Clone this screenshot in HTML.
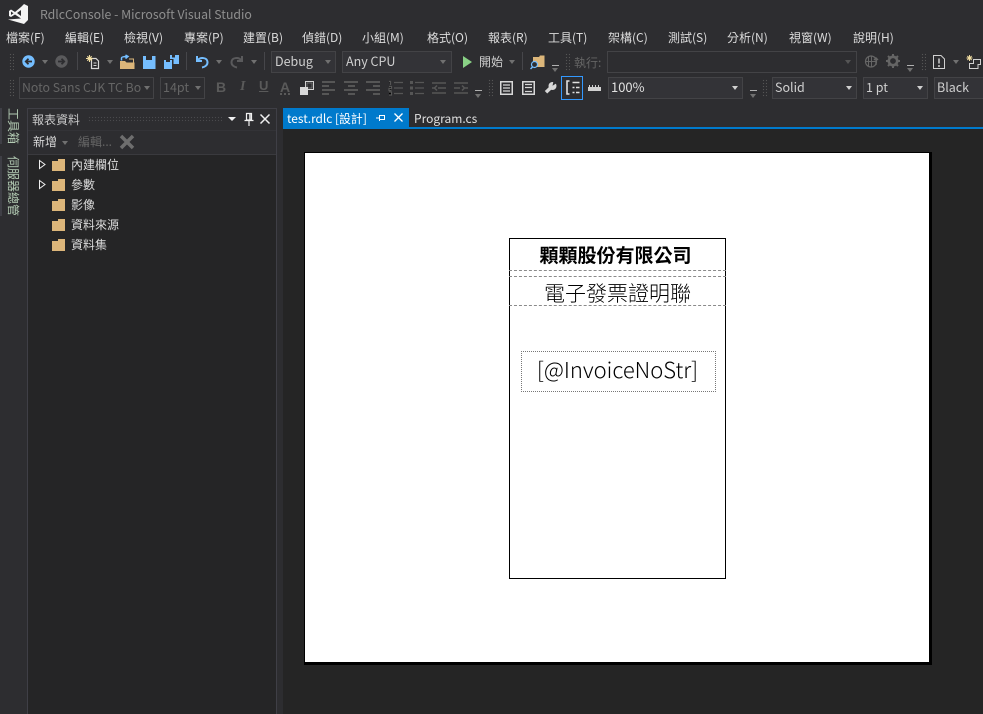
<!DOCTYPE html>
<html><head><meta charset="utf-8">
<style>
html,body{margin:0;padding:0;background:#2d2d30;}
#r{position:relative;width:983px;height:714px;overflow:hidden;background:#2d2d30;font-family:"Liberation Sans","Noto Sans CJK TC",sans-serif;color:#d0d0d0;}
#r *{box-sizing:border-box;}
.a{position:absolute;}
.t{position:absolute;white-space:nowrap;line-height:16px;font-size:12px;font-family:"Noto Sans CJK TC","Liberation Sans",sans-serif;}
.m{top:30px;color:#dcdcdc;}
.c{position:absolute;border:1px solid #434346;height:22px;background:#333337;color:#d0d0d0;font-size:12.5px;line-height:18px;padding-left:3px;white-space:nowrap;font-family:"Noto Sans CJK TC","Liberation Sans",sans-serif;}
.d{color:#656565;border-color:#434346;background:#2d2d30;}
.ar{position:absolute;width:0;height:0;border-left:3.5px solid transparent;border-right:3.5px solid transparent;border-top:4px solid #d0d0d0;}
.ar.g{border-top-color:#707070;}
.grip{position:absolute;width:5px;background-image:radial-gradient(#555 .7px,transparent .8px);background-size:3px 3px;}
.sep{position:absolute;width:1px;height:18px;background:#46464a;}
.f{position:absolute;left:52px;width:13px;height:10px;background:#dcb67a;}
.f:before{content:"";position:absolute;left:6px;top:-2px;width:7px;height:2px;background:#dcb67a;}
.dl{position:absolute;left:509px;width:217px;border-top:1px dashed #8a8a8a;height:0;}
.v{position:absolute;writing-mode:vertical-rl;text-orientation:sideways;font-size:12px;line-height:14px;white-space:nowrap;color:#b4ccb4;font-family:"Noto Sans CJK TC","Liberation Sans",sans-serif;}
svg{position:absolute;overflow:visible;}
</style></head><body><div id="r">

<!-- title -->
<svg style="left:0;top:0" width="30" height="26" viewBox="0 0 30 26"><path d="M21 7L24 4L28 6V20L24 24L8 19.500L21 18.500Z" fill="#f4f4f4"/><path d="M21 7L15 12L11 9.500L9 11V16L11 17L15 14.500L21 18.500ZM21 10L17 13L21 16ZM11 11.500V15L13.500 13.200Z" fill="#f4f4f4" fill-rule="evenodd"/></svg>
<div class="t" style="left:40px;top:6px;color:#8e8e8e;font-size:12.3px;">RdlcConsole - Microsoft Visual Studio</div>

<!-- menu -->
<div class="t m" style="left:6px">檔案(F)</div>
<div class="t m" style="left:65px">編輯(E)</div>
<div class="t m" style="left:124px">檢視(V)</div>
<div class="t m" style="left:184px">專案(P)</div>
<div class="t m" style="left:243px">建置(B)</div>
<div class="t m" style="left:302px">偵錯(D)</div>
<div class="t m" style="left:362px">小組(M)</div>
<div class="t m" style="left:427px">格式(O)</div>
<div class="t m" style="left:488px">報表(R)</div>
<div class="t m" style="left:548px">工具(T)</div>
<div class="t m" style="left:608px">架構(C)</div>
<div class="t m" style="left:668px">測試(S)</div>
<div class="t m" style="left:727px">分析(N)</div>
<div class="t m" style="left:789px">視窗(W)</div>
<div class="t m" style="left:853px">說明(H)</div>

<!-- toolbar 1 -->
<div class="grip" style="left:9px;top:53px;height:18px"></div>
<svg style="left:22px;top:55px" width="13" height="13" viewBox="0 0 13 13"><circle cx="6.500" cy="6.500" r="6.200" fill="#75beff"/><path d="M10 6.500H4M6.500 3.800L3.800 6.500L6.500 9.200" stroke="#2d2d30" stroke-width="1.800" fill="none"/></svg>
<div class="ar g" style="left:42px;top:60px"></div>
<svg style="left:55px;top:55px" width="13" height="13" viewBox="0 0 13 13"><circle cx="6.500" cy="6.500" r="6.200" fill="#5a5a5c"/><path d="M3 6.500H9M6.500 3.800L9.200 6.500L6.500 9.200" stroke="#2d2d30" stroke-width="1.800" fill="none"/></svg>
<div class="sep" style="left:77px;top:52px"></div>
<svg style="left:86px;top:55px" width="15" height="15" viewBox="0 0 15 15"><path d="M5.500 3.500H10L12.500 6V13.500H5.500Z" fill="none" stroke="#d8d8d8" stroke-width="1.200"/><path d="M3.500 0V7M0 3.500H7M1.300 1.300L5.700 5.700M5.700 1.300L1.300 5.700" stroke="#f0dca0" stroke-width="1.100"/><path d="M7.500 8H10.500M7.500 10.500H10.500" stroke="#d8d8d8"/></svg>
<div class="ar g" style="left:107px;top:60px"></div>
<svg style="left:120px;top:55px" width="15" height="14" viewBox="0 0 15 14"><path d="M0 6H5L6.500 7.500H14.500V14H0Z" fill="#dcb67a"/><path d="M1.500 5.500V3C1.500 2 3 1.500 7 1.500M5.500 0L8 1.500L5.500 3.500" stroke="#75beff" stroke-width="1.500" fill="none"/><path d="M9 4H13.500V7.500" stroke="#dcb67a" fill="none"/></svg>
<svg style="left:143px;top:56px" width="13" height="13" viewBox="0 0 13 13"><path d="M0 0H3V4H9V0H12.500V13H0Z" fill="#75beff"/></svg>
<svg style="left:164px;top:55px" width="15" height="14" viewBox="0 0 15 14"><path d="M0 5H2V7H6V5H8V14H0Z" fill="#75beff"/><path d="M6 0H8V2.500H11V0H15V9H9.500V4H6Z" fill="#75beff"/></svg>
<div class="sep" style="left:186px;top:52px"></div>
<svg style="left:195px;top:54px" width="14" height="15" viewBox="0 0 14 15"><path d="M2 2V7H7M2.500 6.500C5 3 12 3 12.500 8C12.800 11 10 13 7 13.500" stroke="#75beff" stroke-width="2" fill="none"/></svg>
<div class="ar g" style="left:216px;top:60px"></div>
<svg style="left:230px;top:54px" width="14" height="15" viewBox="0 0 14 15"><path d="M12 2V7H7M11.500 6.500C9 3 2 3 1.500 8C1.200 11 4 13 7 13.500" stroke="#5a5a5c" stroke-width="2" fill="none"/></svg>
<div class="ar g" style="left:251px;top:60px"></div>
<div class="sep" style="left:264px;top:52px"></div>
<div class="c" style="left:271px;top:51px;width:65px;height:22px;">Debug<div class="ar g" style="left:53px;top:8px"></div></div>
<div class="c" style="left:342px;top:51px;width:110px;height:22px;">Any CPU<div class="ar g" style="left:97px;top:8px"></div></div>
<svg style="left:463px;top:56px" width="9" height="12" viewBox="0 0 9 12"><path d="M0 0L9 6L0 12Z" fill="#89d185"/></svg>
<div class="t" style="left:479px;top:54px;">開始</div>
<div class="ar g" style="left:509px;top:60px"></div>
<div class="sep" style="left:522px;top:52px"></div>
<svg style="left:530px;top:55px" width="15" height="15" viewBox="0 0 15 15"><path d="M3 2H9L10 .5H14.500V12H3Z" fill="#dcb67a"/><circle cx="4.500" cy="9.500" r="3" fill="#2d2d30" stroke="#75beff" stroke-width="1.200"/><path d="M2.500 12L.5 14" stroke="#75beff" stroke-width="1.500"/></svg>
<div class="a" style="left:552px;top:65px;width:7px;height:1px;background:#b0b0b0"></div>
<div class="ar g" style="left:552px;top:68px"></div>
<div class="grip" style="left:565px;top:53px;height:18px"></div>
<div class="t" style="left:574px;top:55px;color:#656565;">執行:</div>
<div class="c d" style="left:607px;top:51px;width:250px;height:22px;"><div class="ar" style="left:237px;top:8px;border-top-color:#555"></div></div>
<svg style="left:865px;top:55px" width="14" height="13" viewBox="0 0 14 13"><circle cx="6" cy="6.500" r="5.500" fill="none" stroke="#656565" stroke-width="1.200"/><path d="M3.500 1.500V11.500M6.500 1V12M.5 6.500H11" stroke="#656565"/><path d="M11 10V3M9 5L11 3L13 5" stroke="#656565" stroke-width="1.400" fill="none"/></svg>
<svg style="left:886px;top:54px" width="14" height="14" viewBox="0 0 14 14"><circle cx="7" cy="7" r="4.200" fill="none" stroke="#656565" stroke-width="2.600"/><path d="M7 0V3M7 11V14M0 7H3M11 7H14M2 2L4 4M10 10L12 12M12 2L10 4M4 10L2 12" stroke="#656565" stroke-width="2"/></svg>
<div class="a" style="left:907px;top:65px;width:7px;height:1px;background:#b0b0b0"></div>
<div class="ar g" style="left:907px;top:68px"></div>
<div class="grip" style="left:921px;top:53px;height:18px"></div>
<svg style="left:933px;top:55px" width="12" height="14" viewBox="0 0 12 14"><path d="M.5 .5H8L11.500 4V13.500H.5Z" fill="none" stroke="#d0d0d0"/><path d="M6 3.500V8.500M6 10V12" stroke="#d0d0d0" stroke-width="1.500"/></svg>
<div class="ar g" style="left:953px;top:60px"></div>
<svg style="left:966px;top:55px" width="15" height="14" viewBox="0 0 15 14"><path d="M3.500 0V6M.5 3H6.500M1.300 1L5.700 5M5.700 1L1.300 5" stroke="#f0dca0"/><path d="M7.500 4.500H14.500V9.500H12V13.500H3.500V8.500H7.500Z" fill="none" stroke="#d0d0d0"/></svg>

<!-- toolbar 2 -->
<div class="grip" style="left:9px;top:79px;height:18px"></div>
<div class="c d" style="left:19px;top:77px;width:135px;height:22px;font-size:12.3px;padding-left:2px;">Noto Sans CJK TC Bo<div class="ar g" style="left:124px;top:8px;"></div></div>
<div class="c d" style="left:160px;top:77px;width:45px;height:22px;padding-left:2px;">14pt<div class="ar g" style="left:34px;top:8px;"></div></div>
<div class="t" style="left:216px;top:79px;color:#5a5a5a;font-weight:bold;font-size:14px;font-family:'Liberation Sans',sans-serif;">B</div>
<div class="t" style="left:240px;top:79px;color:#5a5a5a;font-style:italic;font-weight:bold;font-size:14px;font-family:'Liberation Serif',serif;">I</div>
<div class="t" style="left:259px;top:78px;color:#5a5a5a;font-weight:bold;font-size:13px;font-family:'Liberation Sans',sans-serif;text-decoration:underline;">U</div>
<div class="t" style="left:280px;top:79px;color:#5a5a5a;font-weight:bold;font-family:'Liberation Sans',sans-serif;font-size:14px;">A</div>
<div class="a" style="left:280px;top:93px;width:10px;height:2px;background-image:repeating-linear-gradient(90deg,#5a5a5a 0 2px,transparent 2px 4px)"></div>
<svg style="left:300px;top:81px" width="14" height="14" viewBox="0 0 14 14"><rect x="5.500" y=".5" width="8" height="8" fill="#2d2d30" stroke="#d0d0d0"/><rect x="7" y="2" width="5" height="5" fill="#2d2d30" stroke="#777" stroke-width=".8"/><rect x="0" y="6" width="8" height="8" fill="#d8d8d8"/></svg>
<svg style="left:322px;top:80px" width="150" height="16" viewBox="0 0 150 16"><g stroke="#565656" stroke-width="2"><path d="M0 2H13M0 6H7M0 10H13M0 14H7"/><path d="M22 2H36M26 6H33M22 10H36M26 14H33"/><path d="M44 2H58M51 6H58M44 10H58M51 14H58"/></g><g stroke="#565656" stroke-width="1.200"><path d="M67 1.500H68.500V5M67 6.500H69.500V8.500H67V10.500H69.500M67 12H69.500V15H67M72 2.500H81M72 8H81M72 13.500H81"/></g><g fill="#565656"><rect x="88" y="1" width="3" height="3"/><rect x="88" y="6.500" width="3" height="3"/><rect x="88" y="12" width="3" height="3"/></g><path d="M93 2.500H102M93 8H102M93 13.500H102" stroke="#565656" stroke-width="1.200"/><g stroke="#565656" stroke-width="1.500"><path d="M110 3H124M116 8H124M110 8H113M110 13H124"/><path d="M115 5.500L112.500 8L115 10.500" fill="none"/><path d="M132 3H146M132 8H138M143 8H146M132 13H146"/><path d="M140 5.500L142.500 8L140 10.500" fill="none"/></g></svg>
<div class="a" style="left:475px;top:90px;width:7px;height:1px;background:#b0b0b0"></div>
<div class="ar g" style="left:475px;top:94px"></div>
<div class="grip" style="left:488px;top:79px;height:18px"></div>
<svg style="left:500px;top:81px" width="13" height="14" viewBox="0 0 13 14"><rect x=".75" y=".75" width="11.500" height="12.500" fill="none" stroke="#d8d8d8" stroke-width="1.500"/><path d="M3 4H10M3 7H10M3 10H10" stroke="#d8d8d8" stroke-width="1.200"/></svg>
<svg style="left:522px;top:81px" width="13" height="14" viewBox="0 0 13 14"><rect x=".75" y=".75" width="11.500" height="12.500" fill="none" stroke="#d8d8d8" stroke-width="1.500"/><path d="M3 3.500H10M3 6.500H10M3 10.500H10" stroke="#d8d8d8" stroke-width="1.200"/></svg>
<svg style="left:544px;top:82px" width="13" height="12" viewBox="0 0 13 12"><path d="M2 10.300L7 5.500" stroke="#d8d8d8" stroke-width="3.500"/><circle cx="8.500" cy="4" r="4" fill="#d8d8d8"/><path d="M8.500 3.800L12.800 -.5H8.500Z" fill="#2d2d30" transform="rotate(12 8.500 3.800)"/></svg>
<div class="a" style="left:561px;top:76px;width:22px;height:24px;border:1px solid #3399ff;"></div>
<svg style="left:565px;top:80px" width="15" height="15" viewBox="0 0 15 15"><path d="M4.500 1H2V14H4.500" fill="none" stroke="#e0e0e0" stroke-width="1.600"/><path d="M7.500 2.500H14.500M7.500 7.500H9.500M11 7.500H14.500M7.500 12.500H9.500M11 12.500H14.500" stroke="#e0e0e0" stroke-width="1.400"/></svg>
<svg style="left:588px;top:85px" width="13" height="6" viewBox="0 0 13 6"><rect x="0" y="2" width="13" height="4" fill="#d0d0d0"/><path d="M1.500 0V3M4.500 0V3M7.500 0V3M10.500 0V3" stroke="#d0d0d0"/></svg>
<div class="c" style="left:608px;top:77px;width:135px;height:22px;font-size:13px;color:#e0e0e0;padding-left:2px;">100%<div class="ar" style="left:123px;top:8px"></div></div>
<div class="a" style="left:750px;top:90px;width:7px;height:1px;background:#b0b0b0"></div>
<div class="ar g" style="left:750px;top:94px"></div>
<div class="grip" style="left:762px;top:79px;height:18px"></div>
<div class="c" style="left:772px;top:77px;width:85px;height:22px;padding-left:2px;">Solid<div class="ar" style="left:73px;top:8px"></div></div>
<div class="c" style="left:863px;top:77px;width:65px;height:22px;padding-left:2px;">1 pt<div class="ar" style="left:53px;top:8px"></div></div>
<div class="c" style="left:934px;top:77px;width:60px;height:22px;padding-left:2px;">Black</div>

<!-- left strip -->
<div class="a" style="left:0;top:108px;width:2px;height:36px;background:#3f3f46"></div>
<div class="a" style="left:0;top:156px;width:2px;height:60px;background:#3f3f46"></div>
<div class="v" style="left:6px;top:108px;">工具箱</div>
<div class="v" style="left:6px;top:156px;">伺服器總管</div>

<!-- report data panel -->
<div class="a" style="left:27px;top:108px;width:250px;height:606px;background:#252526;border:1px solid #3f3f46;border-bottom:none;"></div>
<div class="a" style="left:28px;top:109px;width:248px;height:21px;background:#2d2d30"></div>
<div class="t" style="left:32px;top:112px;color:#c8c8c8;">報表資料</div>
<div class="grip" style="left:88px;top:116px;width:134px;height:7px;background-image:radial-gradient(#4a4a4d .7px,transparent .8px);background-size:3px 3px;"></div>
<div class="ar" style="left:228px;top:117px;border-left-width:4px;border-right-width:4px;border-top:4px solid #f0f0f0"></div>
<svg style="left:244px;top:113px" width="10" height="13" viewBox="0 0 10 13"><path d="M2.500 .5H7.500V7H2.500ZM.5 7.500H9.500M5 8V13" fill="none" stroke="#f0f0f0" stroke-width="1.200"/><path d="M6 1V7" stroke="#f0f0f0" stroke-width="1.500"/></svg>
<svg style="left:260px;top:114px" width="10" height="10" viewBox="0 0 10 10"><path d="M.5 .5L9.500 9.500M9.500 .5L.5 9.500" stroke="#f0f0f0" stroke-width="1.500"/></svg>
<div class="a" style="left:28px;top:130px;width:248px;height:25px;background:#2d2d30;border-top:1px solid #333337;border-bottom:1px solid #3a3a3e"></div>
<div class="t" style="left:33px;top:134px;color:#d8d8d8;">新增</div>
<div class="ar g" style="left:62px;top:141px"></div>
<div class="t" style="left:78px;top:134px;color:#656565;">編輯...</div>
<svg style="left:119px;top:134px" width="16" height="16" viewBox="0 0 16 16"><path d="M2 2L14 14M14 2L2 14" stroke="#6e6e6e" stroke-width="3.500"/></svg>

<svg style="left:39px;top:160px" width="7" height="9" viewBox="0 0 7 9"><path d="M.5 .5L6 4.500L.5 8.500Z" fill="#252526" stroke="#f0f0f0"/></svg>
<svg style="left:39px;top:180px" width="7" height="9" viewBox="0 0 7 9"><path d="M.5 .5L6 4.500L.5 8.500Z" fill="#252526" stroke="#f0f0f0"/></svg>
<div class="f" style="top:161px"></div><div class="t" style="left:71px;top:157px;color:#dcdcdc;">內建欄位</div>
<div class="f" style="top:181px"></div><div class="t" style="left:71px;top:177px;color:#dcdcdc;">參數</div>
<div class="f" style="top:201px"></div><div class="t" style="left:71px;top:197px;color:#dcdcdc;">影像</div>
<div class="f" style="top:221px"></div><div class="t" style="left:71px;top:217px;color:#dcdcdc;">資料來源</div>
<div class="f" style="top:241px"></div><div class="t" style="left:71px;top:237px;color:#dcdcdc;">資料集</div>

<!-- tabs -->
<div class="a" style="left:283px;top:108px;width:126px;height:20px;background:#007acc"></div>
<div class="t" style="left:287px;top:111px;color:#fff;font-size:11.900px;">test.rdlc [設計]</div>
<svg style="left:376px;top:114px" width="9" height="8" viewBox="0 0 9 8"><path d="M0 4H3M3.500 1V7M3.500 1.500H8.500V5.500H3.500" fill="none" stroke="#fff"/></svg>
<svg style="left:394px;top:113px" width="9" height="9" viewBox="0 0 9 9"><path d="M.5 .5L8.500 8.500M8.500 .5L.5 8.500" stroke="#fff" stroke-width="1.300"/></svg>
<div class="t" style="left:414px;top:111px;color:#e0e0e0;">Program.cs</div>
<div class="a" style="left:283px;top:127px;width:700px;height:2px;background:#007acc"></div>

<!-- design surface -->
<div class="a" style="left:283px;top:129px;width:700px;height:585px;background:#252525;"></div>
<div class="a" style="left:304px;top:152px;width:628px;height:513px;background:#fff;border:1px solid #000;border-right:3px solid #000;border-bottom:3px solid #000;"></div>
<div class="a" style="left:509px;top:238px;width:217px;height:341px;border:1px solid #000;"></div>
<div class="dl" style="top:270px"></div>
<div class="dl" style="top:276px"></div>
<div class="dl" style="top:305px"></div>
<div class="a" style="left:521px;top:351px;width:195px;height:41px;border:1px dotted #777;"></div>
<div class="t" style="left:508px;top:244px;width:215px;text-align:center;color:#000;font-size:19px;line-height:22px;font-weight:bold;">顆顆股份有限公司</div>
<div class="t" style="left:510px;top:281px;width:215px;text-align:center;color:#000;font-size:21px;line-height:24px;font-weight:300;">電子發票證明聯</div>
<div class="t" style="left:520px;top:355px;width:195px;text-align:center;color:#000;font-size:22px;line-height:28px;font-weight:300;">[@InvoiceNoStr]</div>

</div></body></html>
